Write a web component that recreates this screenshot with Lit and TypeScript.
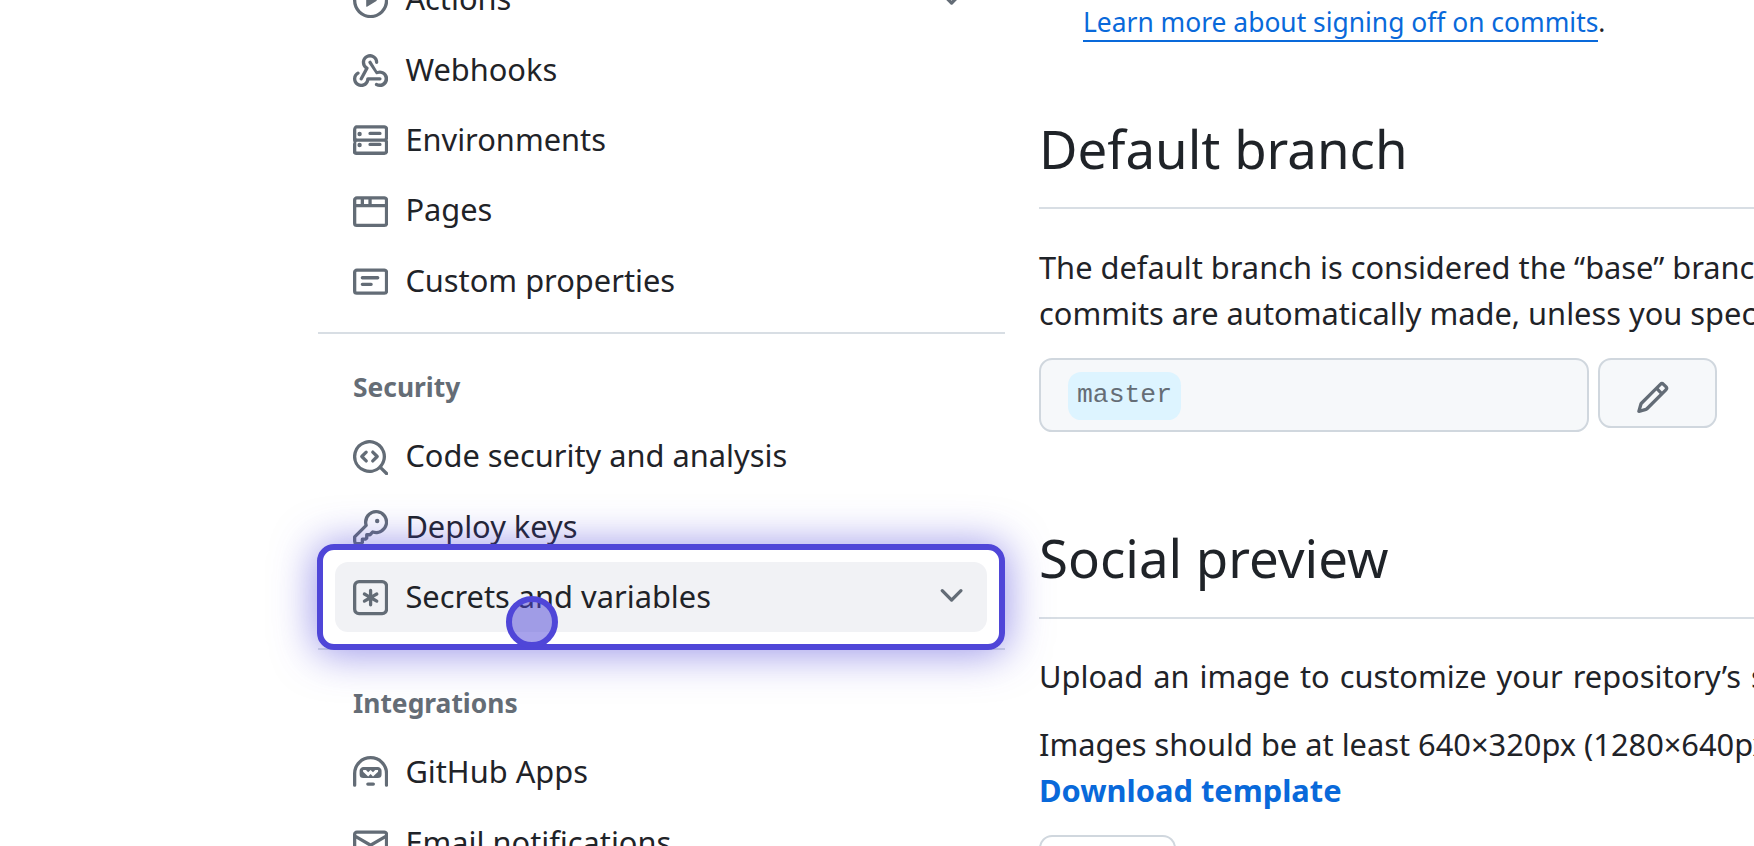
import { LitElement, html, css, svg } from 'lit';
import { customElement } from 'lit/decorators.js';

const ICONS: Record<string, string[]> = {
  play: ['M8 0a8 8 0 1 1 0 16A8 8 0 0 1 8 0ZM1.5 8a6.5 6.5 0 1 0 13 0 6.5 6.5 0 0 0-13 0Zm4.879-2.773 4.264 2.559a.25.25 0 0 1 0 .428l-4.264 2.559A.25.25 0 0 1 6 10.559V5.442a.25.25 0 0 1 .379-.215Z'],
  webhook: [
    'M5.5 4.25a2.25 2.25 0 0 1 4.5 0 .75.75 0 0 0 1.5 0 3.75 3.75 0 1 0-6.14 2.889l-2.272 4.258a.75.75 0 0 0 1.324.706L7 7.25a.75.75 0 0 0-.309-1.015A2.25 2.25 0 0 1 5.5 4.25Z',
    'M7.364 3.607a.75.75 0 0 1 1.03.257l2.608 4.349a3.75 3.75 0 1 1-.628 6.785.75.75 0 0 1 .64-1.357 2.25 2.25 0 1 0 .21-4.053.75.75 0 0 1-.98-.299L7.107 4.636a.75.75 0 0 1 .257-1.03Z',
    'M2.9 8.776A.75.75 0 0 1 2.625 9.8 2.25 2.25 0 1 0 6 11.75a.75.75 0 0 1 .75-.751h5.5a.75.75 0 0 1 0 1.5H7.425a3.751 3.751 0 1 1-5.55-3.998.75.75 0 0 1 1.024.274Z',
  ],
  server: ['M1.75 1h12.5c.966 0 1.75.784 1.75 1.75v4c0 .372-.116.717-.314 1 .198.283.314.628.314 1v4a1.75 1.75 0 0 1-1.75 1.75H1.75A1.75 1.75 0 0 1 0 13.75v-4c0-.372.116-.717.314-1a1.739 1.739 0 0 1-.314-1v-4C0 1.784.784 1 1.75 1ZM1.5 2.75v4c0 .138.112.25.25.25h12.5a.25.25 0 0 0 .25-.25v-4a.25.25 0 0 0-.25-.25H1.75a.25.25 0 0 0-.25.25Zm.25 5.75a.25.25 0 0 0-.25.25v4c0 .138.112.25.25.25h12.5a.25.25 0 0 0 .25-.25v-4a.25.25 0 0 0-.25-.25ZM7 4.75A.75.75 0 0 1 7.75 4h4.5a.75.75 0 0 1 0 1.5h-4.5A.75.75 0 0 1 7 4.75Zm0 5a.75.75 0 0 1 .75-.75h4.5a.75.75 0 0 1 0 1.5h-4.5a.75.75 0 0 1-.75-.75Zm-5 .25a1 1 0 1 1 2 0 1 1 0 0 1-2 0Zm1-6a1 1 0 1 1 0 2 1 1 0 0 1 0-2Z'],
  browser: ['M0 2.75C0 1.784.784 1 1.75 1h12.5c.966 0 1.75.784 1.75 1.75v10.5A1.75 1.75 0 0 1 14.25 15H1.75A1.75 1.75 0 0 1 0 13.25ZM14.5 6h-13v7.25c0 .138.112.25.25.25h12.5a.25.25 0 0 0 .25-.25Zm-6-3.5v2h6v-1.75a.25.25 0 0 0-.25-.25ZM5 2.5v2h2v-2Zm-3.25 0a.25.25 0 0 0-.25.25V4.5h2v-2Z'],
  note: ['M0 3.75C0 2.784.784 2 1.75 2h12.5c.966 0 1.75.784 1.75 1.75v8.5A1.75 1.75 0 0 1 14.25 14H1.75A1.75 1.75 0 0 1 0 12.25Zm1.75-.25a.25.25 0 0 0-.25.25v8.5c0 .138.112.25.25.25h12.5a.25.25 0 0 0 .25-.25v-8.5a.25.25 0 0 0-.25-.25ZM3.5 6.25a.75.75 0 0 1 .75-.75h7a.75.75 0 0 1 0 1.5h-7a.75.75 0 0 1-.75-.75Zm.75 2.25h4a.75.75 0 0 1 0 1.5h-4a.75.75 0 0 1 0-1.5Z'],
  codescan: [
    'M8.47 4.97a.75.75 0 0 0 0 1.06L9.94 7.5 8.47 8.97a.75.75 0 1 0 1.06 1.06l2-2a.75.75 0 0 0 0-1.06l-2-2a.75.75 0 0 0-1.06 0ZM6.53 6.03a.75.75 0 0 0-1.06-1.06l-2 2a.75.75 0 0 0 0 1.06l2 2a.75.75 0 1 0 1.06-1.06L5.06 7.5l1.47-1.47Z',
    'M12.246 13.307a7.501 7.501 0 1 1 1.06-1.06l2.474 2.473a.749.749 0 0 1-.326 1.275.749.749 0 0 1-.734-.215ZM1.5 7.5a6.002 6.002 0 0 0 3.608 5.504 6.002 6.002 0 0 0 6.486-1.117.748.748 0 0 1 .292-.293A6 6 0 1 0 1.5 7.5Z',
  ],
  key: ['M10.5 0a5.499 5.499 0 1 1-1.288 10.848l-.932.932a.749.749 0 0 1-.53.22H7v.75a.749.749 0 0 1-.22.53l-.5.5a.749.749 0 0 1-.53.22H5v.75a.749.749 0 0 1-.22.53l-.5.5a.749.749 0 0 1-.53.22h-2A1.75 1.75 0 0 1 0 14.25v-2c0-.199.079-.389.22-.53l4.932-4.932A5.5 5.5 0 0 1 10.5 0Zm-4 5.5c-.001.431.069.86.205 1.269a.75.75 0 0 1-.181.768L1.5 12.56v1.69c0 .138.112.25.25.25h1.69l.06-.06v-1.19a.75.75 0 0 1 .75-.75h1.19l.06-.06v-1.19a.75.75 0 0 1 .75-.75h1.19l1.023-1.025a.75.75 0 0 1 .768-.18A4 4 0 1 0 6.5 5.5ZM11 6a1 1 0 1 1 0-2 1 1 0 0 1 0 2Z'],
  asterisk: [
    'M0 2.75A2.75 2.75 0 0 1 2.75 0h10.5A2.75 2.75 0 0 1 16 2.75v10.5A2.75 2.75 0 0 1 13.25 16H2.75A2.75 2.75 0 0 1 0 13.25ZM2.75 1.5c-.69 0-1.25.56-1.25 1.25v10.5c0 .69.56 1.25 1.25 1.25h10.5c.69 0 1.25-.56 1.25-1.25V2.75c0-.69-.56-1.25-1.25-1.25Z',
    'M8 4a.75.75 0 0 1 .75.75V6.7l1.69-.975a.75.75 0 0 1 .75 1.3L9.5 8l1.69.976a.75.75 0 0 1-.75 1.298L8.75 9.3v1.951a.75.75 0 0 1-1.5 0V9.299l-1.69.976a.75.75 0 0 1-.75-1.298L6.5 8l-1.69-.975a.75.75 0 0 1 .75-1.3l1.69.976V4.75A.75.75 0 0 1 8 4Z',
  ],
  hubot: [
    'M0 8a8 8 0 0 1 16 0v5.25a.75.75 0 0 1-1.5 0V8a6.5 6.5 0 1 0-13 0v5.25a.75.75 0 0 1-1.5 0Z',
    'M3 6.75C3 5.784 3.784 5 4.75 5h6.5c.966 0 1.75.784 1.75 1.75v1.5A1.75 1.75 0 0 1 11.25 10h-6.5A1.75 1.75 0 0 1 3 8.25ZM4.6 6.4h1.3L6.9 7.4 8 6.4l1.1 1 1-1h1.3v.8L9.1 9.3 8 8.2 6.9 9.3 4.6 7.2Z',
    'M6.75 12h2.5a.75.75 0 0 1 0 1.5h-2.5a.75.75 0 0 1 0-1.5Z',
  ],
  mail: ['M1.75 2h12.5c.966 0 1.75.784 1.75 1.75v8.5A1.75 1.75 0 0 1 14.25 14H1.75A1.75 1.75 0 0 1 0 12.25v-8.5C0 2.784.784 2 1.75 2ZM1.5 12.251c0 .138.112.25.25.25h12.5a.25.25 0 0 0 .25-.25V5.809L8.38 9.397a.75.75 0 0 1-.76 0L1.5 5.809v6.442Zm13-8.181v-.32a.25.25 0 0 0-.25-.25H1.75a.25.25 0 0 0-.25.25v.32L8 7.88Z'],
  pencil: ['M11.013 1.427a1.75 1.75 0 0 1 2.474 0l1.086 1.086a1.75 1.75 0 0 1 0 2.474l-8.61 8.61c-.21.21-.47.364-.756.445l-3.251.93a.75.75 0 0 1-.927-.928l.929-3.25c.081-.286.235-.547.445-.758l8.61-8.61Zm.176 4.823L9.75 4.81l-6.286 6.287a.253.253 0 0 0-.064.108l-.558 1.953 1.953-.558a.253.253 0 0 0 .108-.064Zm1.238-3.763a.25.25 0 0 0-.354 0L10.811 3.75l1.439 1.44 1.263-1.263a.25.25 0 0 0 0-.354Z'],
  chevron: ['M12.78 5.22a.749.749 0 0 1 0 1.06l-4.25 4.25a.749.749 0 0 1-1.06 0L3.22 6.28a.749.749 0 1 1 1.06-1.06L8 8.939l3.72-3.719a.749.749 0 0 1 1.06 0Z'],
};

const icon = (name: string) => html`<svg class="icon" viewBox="0 0 16 16" fill="currentColor">
  ${ICONS[name].map((d) => svg`<path fill-rule="evenodd" d=${d}></path>`)}
</svg>`;

@customElement('app-root')
export class AppRoot extends LitElement {
  static styles = css`
    :host {
      display: block;
      height: 846px;
      overflow: hidden;
      background: #fff;
      color: #1f2328;
      font-family: "Noto Sans", sans-serif;
      font-size: 30.8px;
    }
    .page {
      display: flex;
      gap: 34px;
      padding-left: 318px;
      width: 1800px;
    }
    .sidebar {
      flex: 0 0 687px;
      margin-top: -36px;
    }
    .group {
      padding: 0 18px 0 17px;
    }
    .item {
      position: relative;
      box-sizing: border-box;
      display: flex;
      align-items: center;
      height: 70.4px;
      padding: 0 17.6px 2px;
      gap: 17.6px;
      border-radius: 13.2px;
      white-space: nowrap;
    }
    .item.active {
      background: #f1f2f5;
    }
    .icon {
      width: 35.2px;
      height: 35.2px;
      flex: none;
      color: #636c76;
    }
    .item > .icon {
      margin-top: 4px;
    }
    .item .chev {
      margin-left: auto;
      display: flex;
    }
    .divider {
      height: 2px;
      background: #d8dee4;
    }
    .section {
      color: #656d76;
      font-size: 26.4px;
      font-weight: 700;
      line-height: 36px;
      padding: 0 35px;
      margin: 35px 0 16px;
    }
    .main {
      flex: 0 0 900px;
      white-space: nowrap;
    }
    .learn {
      margin: 0 0 0 44px;
      font-size: 26.4px;
      line-height: 45px;
    }
    a {
      color: #0969da;
      text-decoration: none;
    }
    .learn a {
      border-bottom: 2px solid #0969da;
    }
    h2 {
      margin: 0;
      font-size: 52.8px;
      font-weight: 400;
      line-height: 70px;
      padding-bottom: 23px;
      border-bottom: 2px solid #d8dee4;
    }
    .h-default {
      margin-top: 69px;
    }
    .h-social {
      margin-top: 91px;
      padding-bottom: 24px;
    }
    p {
      margin: 0;
      line-height: 46px;
    }
    .desc {
      margin-top: 35px;
    }
    .h-social + .desc {
      margin-top: 34px;
      word-spacing: 2px;
    }
    .branch {
      display: flex;
      align-items: flex-start;
      gap: 9px;
      margin-top: 22px;
    }
    .branch-input {
      box-sizing: border-box;
      width: 550px;
      height: 74px;
      padding: 9px 27px;
      background: #f6f8fa;
      border: 2px solid #d0d7de;
      border-radius: 13.2px;
    }
    .pill {
      display: inline-block;
      height: 48px;
      line-height: 46px;
      padding: 0 9px;
      border-radius: 13.2px;
      background: #ddf4ff;
      color: #656d76;
      font-family: "Liberation Mono", monospace;
      font-size: 26.4px;
    }
    .edit {
      box-sizing: border-box;
      display: flex;
      align-items: center;
      justify-content: center;
      width: 119px;
      height: 70px;
      background: #f6f8fa;
      border: 2px solid #d0d7de;
      border-radius: 13.2px;
      padding: 9px 10px 0 0;
    }
    .upload {
      margin-top: 22px;
    }
    .template {
      font-weight: 700;
      display: block;
      line-height: 46px;
    }
    .upload-btn {
      box-sizing: border-box;
      display: block;
      width: 137px;
      height: 70px;
      margin-top: 22px;
      background: #fff;
      border: 2px solid #d0d7de;
      border-radius: 13.2px;
    }
    .spotlight {
      position: absolute;
      inset: -18px;
      border: 6px solid #4f46d8;
      border-radius: 17px;
      box-shadow: 0 2px 40px 3px rgba(79, 70, 216, 0.55);
      pointer-events: none;
    }
    .pointer {
      position: absolute;
      left: 171px;
      top: 34px;
      box-sizing: border-box;
      width: 52px;
      height: 52px;
      border: 6px solid #4f46d8;
      border-radius: 50%;
      background: rgba(79, 70, 216, 0.5);
    }
  `;

  private renderItem(name: string, label: string, chevron = false) {
    return html`<div class="item">
      ${icon(name)}<span>${label}</span>
      ${chevron ? html`<span class="chev">${icon('chevron')}</span>` : ''}
    </div>`;
  }

  render() {
    return html`
      <div class="page">
        <aside class="sidebar">
          <div class="group">
            ${this.renderItem('play', 'Actions', true)}
            ${this.renderItem('webhook', 'Webhooks')}
            ${this.renderItem('server', 'Environments')}
            ${this.renderItem('browser', 'Pages')}
            ${this.renderItem('note', 'Custom properties')}
          </div>
          <div class="divider" style="margin-top:16px"></div>
          <div class="section">Security</div>
          <div class="group">
            ${this.renderItem('codescan', 'Code security and analysis')}
            ${this.renderItem('key', 'Deploy keys')}
            <div class="item active">
              ${icon('asterisk')}<span>Secrets and variables</span>
              <span class="chev">${icon('chevron')}</span>
              <div class="spotlight"></div>
              <div class="pointer"></div>
            </div>
          </div>
          <div class="divider" style="margin-top:16px"></div>
          <div class="section">Integrations</div>
          <div class="group">
            ${this.renderItem('hubot', 'GitHub Apps')}
            ${this.renderItem('mail', 'Email notifications')}
          </div>
        </aside>
        <main class="main">
          <p class="learn"><a href="#">Learn more about signing off on commits</a>.</p>
          <h2 class="h-default">Default branch</h2>
          <p class="desc">The default branch is considered the “base” branch in your repository, against which all pull<br />
            commits are automatically made, unless you specify a different branch.</p>
          <div class="branch">
            <div class="branch-input"><span class="pill">master</span></div>
            <button class="edit" aria-label="Edit">${icon('pencil')}</button>
          </div>
          <h2 class="h-social">Social preview</h2>
          <p class="desc">Upload an image to customize your repository’s social media preview.</p>
          <p class="upload">Images should be at least 640×320px (1280×640px for best display).</p>
          <a class="template" href="#">Download template</a>
          <div class="upload-btn"></div>
        </main>
      </div>
    `;
  }
}
